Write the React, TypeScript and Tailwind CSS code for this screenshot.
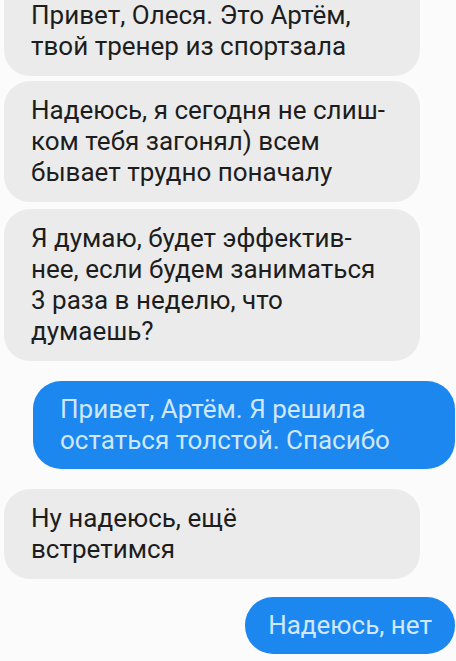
const Incoming = ({ lines, className = "" }: { lines: string[]; className?: string }) => (
  <div className={`mr-[36px] ml-[4px] rounded-[26px] bg-[#ebebeb] py-[14px] pl-[27px] text-[#1d1d1d] ${className}`}>
    {lines.map((l, i) => (
      <div key={i} className="whitespace-nowrap leading-[31px]">
        {l}
      </div>
    ))}
  </div>
);

const Outgoing = ({ lines, className = "" }: { lines: string[]; className?: string }) => (
  <div className={`mr-[1px] self-end rounded-[28px] bg-[#1c87ee] py-[13px] text-[#cfe7ff] ${className}`}>
    {lines.map((l, i) => (
      <div key={i} className="whitespace-nowrap leading-[31px]">
        {l}
      </div>
    ))}
  </div>
);

export default function App() {
  return (
    <div
      className="flex h-[661px] w-[456px] flex-col overflow-hidden bg-[#fbfbfb] text-[26px]"
      style={{ fontFamily: "Roboto, 'Noto Sans', sans-serif" }}
    >
      <Incoming
        className="-mt-[14px] !rounded-t-none"
        lines={["Привет, Олеся. Это Артём,", "твой тренер из спортзала"]}
      />
      <Incoming
        className="mt-[5px]"
        lines={["Надеюсь, я сегодня не слиш-", "ком тебя загонял) всем", "бывает трудно поначалу"]}
      />
      <Incoming
        className="mt-[7px]"
        lines={["Я думаю, будет эффектив-", "нее, если будем заниматься", "3 раза в неделю, что", "думаешь?"]}
      />
      <Outgoing
        className="mt-[20px] w-[422px] pl-[27px]"
        lines={["Привет, Артём. Я решила", "остаться толстой. Спасибо"]}
      />
      <Incoming className="mt-[20px]" lines={["Ну надеюсь, ещё", "встретимся"]} />
      <Outgoing className="mt-[18px] px-[23px]" lines={["Надеюсь, нет"]} />
    </div>
  );
}
